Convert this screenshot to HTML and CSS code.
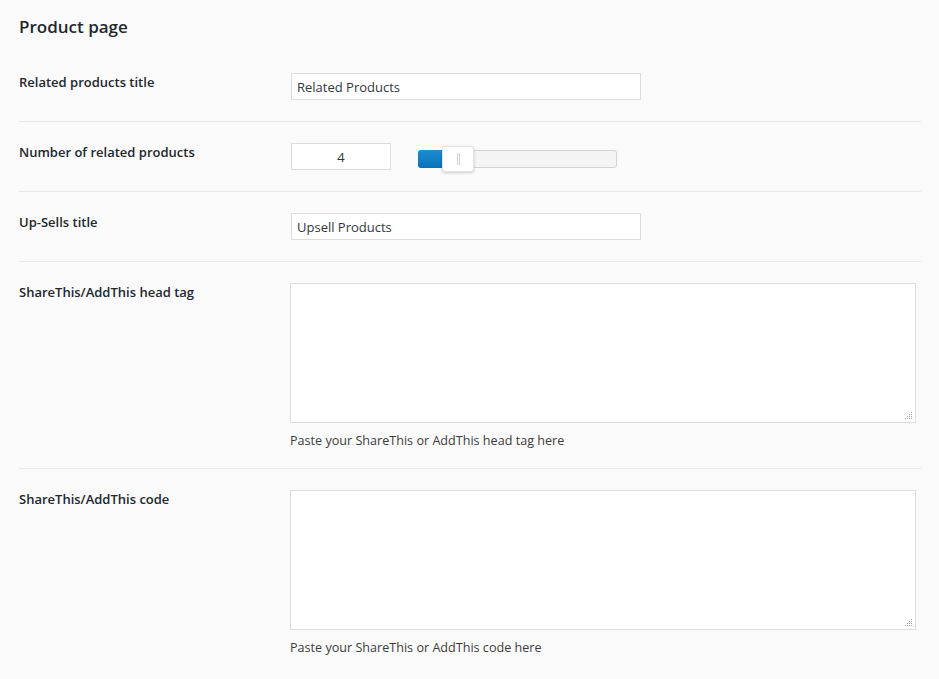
FILE: index.html
```html
<!DOCTYPE html>
<html lang="en">
<head>
<meta charset="utf-8">
<title>Product page</title>
<link rel="stylesheet" href="styles.css">
</head>
<body>
<div class="page">
  <h2 class="heading">Product page</h2>

  <div class="row">
    <div class="label">Related products title</div>
    <div class="field"><input class="text-input" type="text" value="Related Products"></div>
  </div>

  <div class="row">
    <div class="label">Number of related products</div>
    <div class="field field-inline">
      <input class="num-input" type="text" value="4">
      <div class="slider">
        <div class="slider-fill" style="width: 25px"></div>
        <div class="slider-handle" style="left: 23px"><span class="grip-line"></span><span class="grip-line"></span></div>
      </div>
    </div>
  </div>

  <div class="row">
    <div class="label">Up-Sells title</div>
    <div class="field"><input class="text-input" type="text" value="Upsell Products"></div>
  </div>

  <div class="row row-desc">
    <div class="label">ShareThis/AddThis head tag</div>
    <div class="field">
      <div class="area-wrap">
        <textarea class="area"></textarea>
        <svg class="resize-grip" width="8" height="8" viewBox="0 0 8 8"><g fill="#a8a8a8"><rect x="6" y="0" width="1" height="1"/><rect x="4" y="2" width="1" height="1"/><rect x="6" y="2" width="1" height="1"/><rect x="2" y="4" width="1" height="1"/><rect x="4" y="4" width="1" height="1"/><rect x="6" y="4" width="1" height="1"/><rect x="0" y="6" width="1" height="1"/><rect x="2" y="6" width="1" height="1"/><rect x="4" y="6" width="1" height="1"/><rect x="6" y="6" width="1" height="1"/></g></svg>
      </div>
      <p class="desc">Paste your ShareThis or AddThis head tag here</p>
    </div>
  </div>

  <div class="row row-desc row-last">
    <div class="label">ShareThis/AddThis code</div>
    <div class="field">
      <div class="area-wrap">
        <textarea class="area"></textarea>
        <svg class="resize-grip" width="8" height="8" viewBox="0 0 8 8"><g fill="#a8a8a8"><rect x="6" y="0" width="1" height="1"/><rect x="4" y="2" width="1" height="1"/><rect x="6" y="2" width="1" height="1"/><rect x="2" y="4" width="1" height="1"/><rect x="4" y="4" width="1" height="1"/><rect x="6" y="4" width="1" height="1"/><rect x="0" y="6" width="1" height="1"/><rect x="2" y="6" width="1" height="1"/><rect x="4" y="6" width="1" height="1"/><rect x="6" y="6" width="1" height="1"/></g></svg>
      </div>
      <p class="desc">Paste your ShareThis or AddThis code here</p>
    </div>
  </div>
</div>
</body>
</html>
```

FILE: styles.css
```css
html, body {
  margin: 0;
  padding: 0;
  background: #fafafa;
}
body {
  font-family: "Open Sans", "Noto Sans", sans-serif;
  color: #23282d;
  font-size: 13px;
}
.page {
  padding: 15px 18px 0 19px;
}
.heading {
  margin: 0 0 13px 0;
  font-size: 17px;
  line-height: 24px;
  font-weight: 600;
  color: #23282d;
}
.row {
  display: flex;
  align-items: flex-start;
  padding: 21px 0 21px 0;
  border-bottom: 1px solid #e8e8e8;
}
.row-desc {
  padding-bottom: 19px;
}
.row-last {
  border-bottom: none;
}
.label {
  width: 271px;
  flex: none;
  font-size: 13px;
  font-weight: 600;
  line-height: 18px;
  color: #23282d;
}
.field {
  flex: 1;
}
.field-inline {
  display: flex;
  align-items: center;
}
.text-input {
  box-sizing: border-box;
  display: block;
  margin: 0 0 0 1px;
  width: 350px;
  height: 27px;
  padding: 0 5px;
  border: 1px solid #dddddd;
  background: #ffffff;
  font-family: inherit;
  font-size: 13px;
  color: #32373c;
  outline: none;
}
.num-input {
  box-sizing: border-box;
  display: block;
  margin: 0 0 0 1px;
  width: 100px;
  height: 27px;
  padding: 0 6px;
  border: 1px solid #dddddd;
  background: #ffffff;
  font-family: inherit;
  font-size: 13px;
  color: #32373c;
  text-align: center;
  outline: none;
}
.slider {
  position: relative;
  box-sizing: border-box;
  margin-left: 27px;
  margin-top: 4px;
  width: 199px;
  height: 18px;
  border: 1px solid #d3d3d3;
  border-radius: 3px;
  background: #f4f4f4;
}
.slider-fill {
  position: absolute;
  left: -1px;
  top: -1px;
  bottom: -1px;
  border-radius: 3px 0 0 3px;
  background: linear-gradient(#1e8cd2, #0a72b8);
}
.slider-handle {
  position: absolute;
  top: -5px;
  box-sizing: border-box;
  width: 32px;
  height: 26px;
  border: 1px solid #e2e2e2;
  border-radius: 3px;
  background: #ffffff;
  box-shadow: 0 1px 3px rgba(0, 0, 0, 0.18);
  display: flex;
  justify-content: center;
  align-items: center;
  gap: 1px;
}
.grip-line {
  display: block;
  width: 1px;
  height: 12px;
  background: #d0d0d0;
}
.area-wrap {
  position: relative;
  width: 626px;
  height: 140px;
}
.area {
  box-sizing: border-box;
  display: block;
  width: 626px;
  height: 140px;
  margin: 0;
  border: 1px solid #dddddd;
  background: #ffffff;
  resize: none;
  outline: none;
  font-family: inherit;
}
.resize-grip {
  position: absolute;
  right: 3px;
  bottom: 3px;
}
.desc {
  margin: 9px 0 0 0;
  font-size: 12.6px;
  line-height: 17px;
  color: #3c3c3c;
}
```
